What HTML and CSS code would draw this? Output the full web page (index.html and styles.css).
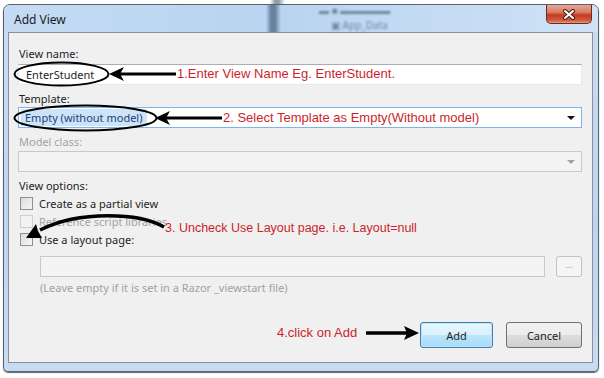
FILE: index.html
```html
<!DOCTYPE html>
<html lang="en">
<head>
    <meta charset="UTF-8">
    <title>Add View</title>
    <link rel="stylesheet" href="styles.css">
</head>
<body>
<div class="screen">
    <div class="window">
        <div class="titlebar">
            <span class="title">Add View</span>
            <div class="ghost">
                <div>&#9644; &#9632; &#9644;&#9644;&#9644;&#9644;&#9644;</div>
                <div class="ghost-line">&#9635; App_Data</div>
            </div>
            <button class="close" type="button">
                <svg width="14" height="11" viewBox="0 0 14 11">
                    <path d="M3 2 L11 9 M11 2 L3 9" stroke="#4a1a12" stroke-width="4" stroke-linecap="round"/>
                    <path d="M3 2 L11 9 M11 2 L3 9" stroke="#fff" stroke-width="2" stroke-linecap="round"/>
                </svg>
            </button>
        </div>

        <div class="client">
            <label class="lbl">View name:</label>
            <div class="field">EnterStudent</div>

            <label class="lbl gap">Template:</label>
            <div class="field select focus">
                <span class="picked">Empty (without model)</span>
                <span class="caret"></span>
            </div>

            <label class="lbl gap muted">Model class:</label>
            <div class="field select off">
                <span class="caret"></span>
            </div>

            <label class="lbl gap">View options:</label>
            <div class="check"><span class="box"></span>Create as a partial view</div>
            <div class="check muted"><span class="box"></span>Reference script libraries</div>
            <div class="check"><span class="box"></span>Use a layout page:</div>

            <div class="layout-row">
                <div class="field off"></div>
                <button class="browse" type="button">...</button>
            </div>
            <div class="hint">(Leave empty if it is set in a Razor _viewstart file)</div>

            <div class="actions">
                <button class="btn primary" type="button">Add</button>
                <button class="btn" type="button">Cancel</button>
            </div>
        </div>
    </div>

    <!-- annotations drawn on top of the screenshot -->
    <svg class="marks" width="604" height="378" viewBox="0 0 604 378">
        <ellipse cx="61.5" cy="74" rx="47" ry="11.5" fill="none" stroke="#000" stroke-width="2"/>
        <path d="M176 74 L120 74" stroke="#000" stroke-width="3"/>
        <polygon points="109,74 124,67 120,74 124,81" fill="#000"/>

        <ellipse cx="85.5" cy="118" rx="71" ry="12.5" fill="none" stroke="#000" stroke-width="2"/>
        <path d="M222 118 L166 118" stroke="#000" stroke-width="3"/>
        <polygon points="155,118 170,111 166,118 170,125" fill="#000"/>

        <path d="M164 227 C 140 213, 80 210, 40 230" fill="none" stroke="#000" stroke-width="3.5"/>
        <polygon points="26,238 36,224 38,231 42,238" fill="#000"/>

        <path d="M366 333 L408 333" stroke="#000" stroke-width="3.5"/>
        <polygon points="419,333 404,326 407,333 404,340" fill="#000"/>
    </svg>
    <span class="note n1">1.Enter View Name Eg. EnterStudent.</span>
    <span class="note n2">2. Select Template as Empty(Without model)</span>
    <span class="note n3">3. Uncheck Use Layout page. i.e. Layout=null</span>
    <span class="note n4">4.click on Add</span>
</div>
</body>
</html>
```

FILE: styles.css
```css
body {
    margin: 0;
    background: #fff;
    font-family: "Noto Sans", "Open Sans", sans-serif;
    font-size: 11px;
    color: #1e1e1e;
}
.screen {
    position: relative;
    width: 604px;
    height: 378px;
    overflow: hidden;
    padding-top: 4px;
    box-sizing: border-box;
    background: linear-gradient(90deg, transparent 270px, rgba(40, 60, 90, .5) 275px, rgba(40, 60, 90, .5) 279px, transparent 285px) no-repeat 0 0 / 604px 6px, #fff;
}
.window {
    box-sizing: border-box;
    width: 596px;
    height: 368px;
    margin-left: 3px;
    padding: 0 4px 8px 4px;
    border: 1px solid #59616b;
    border-radius: 7px 7px 5px 5px;
    background: linear-gradient(180deg, #c9def4 0%, #bcd5f0 60%, #c6dcf3 100%);
    box-shadow: 0 1px 1px rgba(0, 0, 0, .6);
}
.titlebar {
    position: relative;
    height: 27px;
    display: flex;
    align-items: flex-start;
    margin: 0 -4px;
    padding: 0 4px;
    border-radius: 6px 6px 0 0;
    background:
        linear-gradient(90deg, transparent 262px, rgba(40, 60, 90, .55) 267px, rgba(40, 60, 90, .55) 271px, transparent 277px),
        linear-gradient(90deg, #c4dbf3 0%, #b9d4f0 45%, #cfe2f6 100%);
}
.title {
    margin: 7px 0 0 6px;
    font-size: 12px;
    line-height: 15px;
    color: #1b1b1b;
}
.ghost {
    position: absolute;
    left: 315px;
    top: 0;
    color: #52637a;
    font-size: 10px;
    line-height: 11px;
    filter: blur(1.1px);
    opacity: .7;
}
.ghost-line {
    margin: 4px 0 0 12px;
}
.close {
    margin-left: auto;
    margin-right: 2px;
    width: 46px;
    height: 19px;
    padding: 0;
    border: 1px solid #6d2b1f;
    border-top: none;
    border-radius: 0 0 5px 5px;
    background: linear-gradient(180deg, #e6a595 0%, #d77d67 40%, #c43c22 55%, #cf5a3e 85%, #e49a80 100%);
    display: flex;
    align-items: center;
    justify-content: center;
}
.client {
    box-sizing: border-box;
    height: 331px;
    margin-right: 1px;
    padding: 13px 10px 0 9px;
    border: 1px solid #8b9098;
    background: #f0f0f0;
}
.lbl {
    display: block;
    line-height: 16px;
    padding-left: 1px;
}
.gap {
    margin-top: 6px;
}
.muted {
    color: #a3a3a3;
}
.field {
    box-sizing: border-box;
    height: 21px;
    margin-top: 2px;
    padding: 0 7px;
    display: flex;
    align-items: center;
    background: #fff;
    border: 1px solid #e3e9ef;
    border-top-color: #abadb3;
}
.select {
    margin-top: 0;
    padding: 0 2px;
    justify-content: space-between;
}
.focus {
    border-color: #7eb4ea;
}
.picked {
    padding: 0 4px;
    line-height: 17px;
    background: #cde3f8;
    color: #1d3f78;
}
.off {
    background: #f4f4f4;
    border-color: #c9c9c9;
}
.lbl.muted + .off {
    margin-top: 1px;
}
.caret {
    margin-left: auto;
    margin-right: 4px;
    border-left: 4px solid transparent;
    border-right: 4px solid transparent;
    border-top: 4px solid #111;
}
.off .caret {
    border-top-color: #a0a0a0;
}
.check {
    display: flex;
    align-items: center;
    height: 18px;
}
.box {
    box-sizing: border-box;
    width: 13px;
    height: 13px;
    margin: 0 6px 0 2px;
    border: 1px solid #8e8f8f;
    background: linear-gradient(135deg, #dcdcdc, #f6f6f6);
}
.check.muted .box {
    border-color: #cfcfcf;
    background: #f2f2f2;
}
.layout-row {
    display: flex;
    gap: 11px;
    margin: 8px 0 0 22px;
}
.layout-row .field {
    flex: 1;
    margin-top: 0;
}
.browse {
    box-sizing: border-box;
    width: 26px;
    height: 21px;
    padding: 0 0 4px;
    border: 1px solid #c2c2c2;
    border-radius: 3px;
    background: #f5f5f5;
    color: #9a9a9a;
    font-size: 9px;
    font-family: inherit;
}
.hint {
    margin: 3px 0 0 22px;
    line-height: 16px;
    color: #a0a0a0;
}
.actions {
    display: flex;
    justify-content: flex-end;
    gap: 13px;
    margin-top: 26px;
}
.btn {
    box-sizing: border-box;
    width: 76px;
    height: 26px;
    border: 1px solid #707070;
    border-radius: 3px;
    background: linear-gradient(180deg, #f2f2f2 0%, #ebebeb 50%, #dddddd 51%, #cfcfcf 100%);
    font-family: inherit;
    font-size: 11px;
    color: #1e1e1e;
}
.btn.primary {
    width: 73px;
    border-color: #3c7fb1;
    background: linear-gradient(180deg, #eaf6fd 0%, #d9f0fc 50%, #bee6fd 51%, #a7d9f5 100%);
    box-shadow: inset 0 0 0 1px #bfe4f8;
}
.marks {
    position: absolute;
    left: 0;
    top: 0;
}
.note {
    position: absolute;
    font-family: "Liberation Sans", Arial, sans-serif;
    font-size: 13px;
    line-height: 16px;
    color: #cc1f2b;
    white-space: nowrap;
}
.n1 { left: 177px; top: 66px; }
.n2 { left: 223px; top: 110px; }
.n3 { left: 165px; top: 220px; font-size: 12.5px; }
.n4 { left: 277px; top: 325px; }
```
